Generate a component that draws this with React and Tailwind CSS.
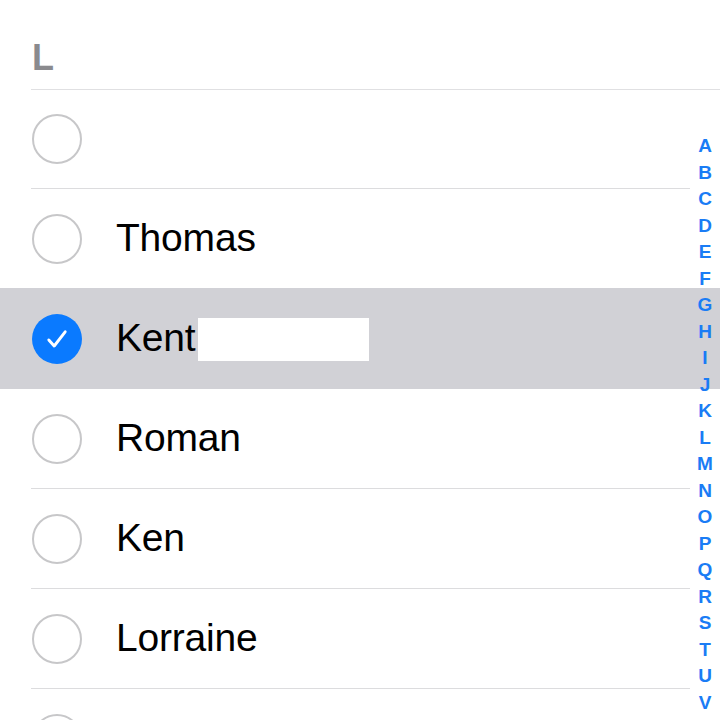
const rows = [
  { name: '', checked: false, h: 'h-[99px]' },
  { name: 'Thomas', checked: false, h: 'h-[100px]' },
  { name: 'Kent', checked: true, h: 'h-[101px]' },
  { name: 'Roman', checked: false, h: 'h-[100px]' },
  { name: 'Ken', checked: false, h: 'h-[100px]' },
  { name: 'Lorraine', checked: false, h: 'h-[100px]' },
  { name: '', checked: false, h: 'h-[100px]' },
];

const letters = 'ABCDEFGHIJKLMNOPQRSTUV'.split('');

function Radio({ checked }) {
  if (checked) {
    return (
      <div className="w-[50px] h-[50px] rounded-full bg-[#0a7aff] flex items-center justify-center shrink-0">
        <svg width="28" height="28" viewBox="0 0 24 24" fill="none">
          <path d="M5 12.8l4.6 5.2L19 5.8" stroke="white" strokeWidth="2.5" strokeLinecap="round" strokeLinejoin="round" />
        </svg>
      </div>
    );
  }
  return <div className="w-[50px] h-[50px] rounded-full border-[2.5px] border-[#c7c7c9] shrink-0" />;
}

export default function App() {
  return (
    <div className="relative w-[720px] h-[720px] overflow-hidden bg-white font-['Liberation_Sans',Arial,sans-serif]">
      {/* Section header */}
      <div className="h-[90px] ml-[31px] border-b border-[#e0e0e2] flex items-start pt-[40px]">
        <span className="text-[36px] leading-none font-semibold text-[#8a8a8e] pl-[1px]">L</span>
      </div>

      {/* Rows */}
      {rows.map((r, i) => (
        <div key={i} className={r.checked ? 'bg-[#d1d1d6] -mt-px' : ''}>
          <div className={`${r.h} ml-[31px] mr-[30px] flex items-center gap-[34px] pl-[1px] ${r.checked ? '' : 'border-b border-[#dcdcde]'}`}>
            <Radio checked={r.checked} />
            <div className="flex items-center">
              <span className="text-[39px] text-black tracking-[-0.2px]">{r.name}</span>
              {r.checked && <div className="w-[171px] h-[43px] bg-white ml-[3px] mt-[2px]" />}
            </div>
          </div>
        </div>
      ))}

      {/* Alphabet index */}
      <div className="absolute top-[133px] right-0 w-[30px] flex flex-col items-center">
        {letters.map((l) => (
          <div key={l} className="h-[26.5px] leading-[26.5px] text-[19px] font-bold text-[#1a7cf5]">
            {l}
          </div>
        ))}
      </div>
    </div>
  );
}
